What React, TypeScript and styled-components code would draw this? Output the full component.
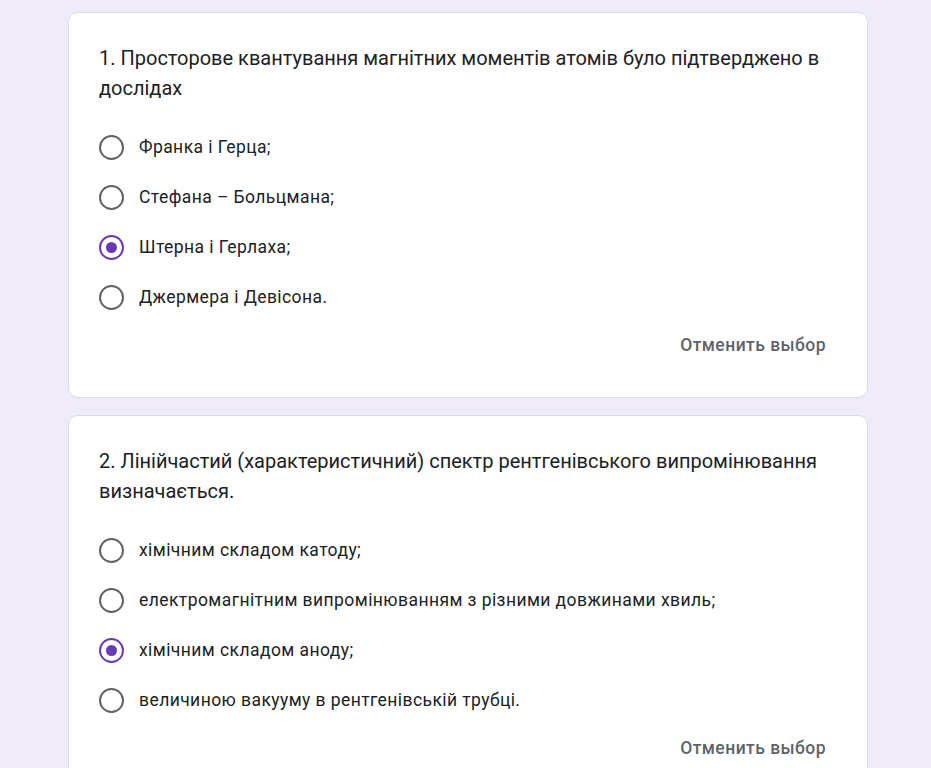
import React from "react";
import styled, { createGlobalStyle } from "styled-components";

const Global = createGlobalStyle`
  html, body { margin: 0; padding: 0; background: #f0ebf8; }
  body { font-family: Roboto, "Noto Sans", Arial, sans-serif; color: #202124; }
`;

const Page = styled.div`
  padding: 12px 0 40px 68px;
  display: flex;
  flex-direction: column;
  gap: 17px;
`;

const Card = styled.section`
  width: 800px;
  box-sizing: border-box;
  background: #fff;
  border: 1px solid #dadce0;
  border-radius: 10px;
  padding: 30px 30px 30px 30px;
  display: flex;
  flex-direction: column;
`;

const Question = styled.div`
  font-size: 20px;
  line-height: 30px;
  font-weight: 400;
  letter-spacing: 0;
  color: #202124;
`;

const Options = styled.div`
  margin-top: 19px;
  display: flex;
  flex-direction: column;
`;

const Option = styled.label`
  height: 50px;
  display: flex;
  align-items: center;
  gap: 15px;
  cursor: pointer;
`;

const Radio = styled.span<{ $checked?: boolean }>`
  width: 25px;
  height: 25px;
  box-sizing: border-box;
  border-radius: 50%;
  border: 2.5px solid ${(p) => (p.$checked ? "#673ab7" : "#5f6368")};
  display: flex;
  align-items: center;
  justify-content: center;
  flex-shrink: 0;
  &::after {
    content: "";
    width: 11px;
    height: 11px;
    border-radius: 50%;
    background: #673ab7;
    display: ${(p) => (p.$checked ? "block" : "none")};
  }
`;

const OptionText = styled.span`
  font-size: 17.5px;
  line-height: 25px;
  color: #202124;
  letter-spacing: 0.42px;
`;

const Footer = styled.div`
  display: flex;
  justify-content: flex-end;
`;

const ClearButton = styled.button`
  height: 45px;
  padding: 0 11px 0 10px;
  border: none;
  background: transparent;
  font-family: Roboto, "Noto Sans", Arial, sans-serif;
  font-size: 17.5px;
  font-weight: 500;
  letter-spacing: 0.45px;
  color: #5f6368;
  cursor: pointer;
`;

type Q = { title: string; options: string[]; checked: number };

const questions: Q[] = [
  {
    title:
      "1. Просторове квантування магнітних моментів атомів було підтверджено в дослідах",
    options: [
      "Франка і Герца;",
      "Стефана – Больцмана;",
      "Штерна і Герлаха;",
      "Джермера і Девісона.",
    ],
    checked: 2,
  },
  {
    title:
      "2. Лінійчастий (характеристичний) спектр рентгенівського випромінювання визначається.",
    options: [
      "хімічним складом катоду;",
      "електромагнітним випромінюванням з різними довжинами хвиль;",
      "хімічним складом аноду;",
      "величиною вакууму в рентгенівській трубці.",
    ],
    checked: 2,
  },
];

export default function App() {
  return (
    <>
      <Global />
      <Page>
        {questions.map((q, i) => (
          <Card key={i}>
            <Question>{q.title}</Question>
            <Options>
              {q.options.map((o, j) => (
                <Option key={j}>
                  <Radio $checked={j === q.checked} />
                  <OptionText>{o}</OptionText>
                </Option>
              ))}
            </Options>
            <Footer>
              <ClearButton>Отменить выбор</ClearButton>
            </Footer>
          </Card>
        ))}
      </Page>
    </>
  );
}
